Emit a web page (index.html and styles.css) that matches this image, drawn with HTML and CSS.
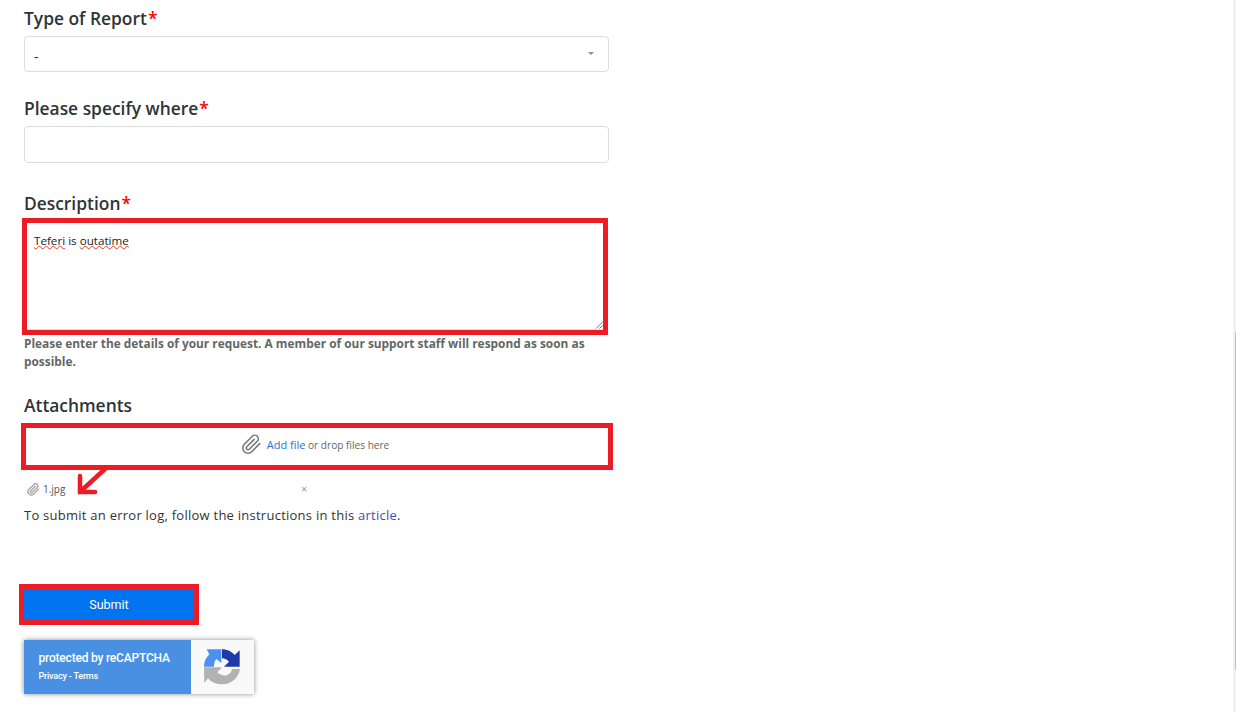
FILE: index.html
```html
<!DOCTYPE html>
<html lang="en">
<head>
<meta charset="utf-8">
<title>Submit a request</title>
<link rel="stylesheet" href="styles.css">
</head>
<body>
<form class="form">
  <div class="field field-type">
    <label class="label">Type of Report<span class="req">*</span></label>
    <div class="select"><span>-</span><span class="caret"></span></div>
  </div>
  <div class="field field-where">
    <label class="label">Please specify where<span class="req">*</span></label>
    <div class="input"></div>
  </div>
  <div class="field field-desc">
    <label class="label">Description<span class="req">*</span></label>
    <div class="textarea">
      <span class="typed"><span class="squiggle">Teferi</span> is <span class="squiggle">outatime</span></span>
      <svg class="grip" viewBox="0 0 8 8" width="8" height="8"><path d="M1 7.5 7.5 1M4.5 7.5 7.5 4.5" stroke="#777" stroke-width="1" fill="none"/></svg>
    </div>
    <p class="help">Please enter the details of your request. A member of our support staff will respond as soon as possible.</p>
  </div>
  <div class="field field-attach">
    <label class="label">Attachments</label>
    <div class="drop">
      <svg class="clip" viewBox="0 0 24 24" width="21" height="21"><path d="M21.44 11.05l-9.19 9.19a6 6 0 0 1-8.49-8.49l9.19-9.19a4 4 0 0 1 5.66 5.66l-9.2 9.19a2 2 0 0 1-2.83-2.83l8.49-8.48" fill="none" stroke="#777" stroke-width="1.8" stroke-linecap="round"/></svg>
      <span class="drop-text"><a class="add">Add file</a> or drop files here</span>
    </div>
    <div class="file">
      <svg class="clip-small" viewBox="0 0 24 24" width="13" height="13"><path d="M21.44 11.05l-9.19 9.19a6 6 0 0 1-8.49-8.49l9.19-9.19a4 4 0 0 1 5.66 5.66l-9.2 9.19a2 2 0 0 1-2.83-2.83l8.49-8.48" fill="none" stroke="#aaa" stroke-width="2.6" stroke-linecap="round"/></svg>
      <span class="file-name">1.jpg</span>
      <span class="file-x">×</span>
    </div>
    <p class="note">To submit an error log, follow the instructions in this <a class="article">article</a>.</p>
  </div>
  <div class="submit-box"><button type="button" class="submit">Submit</button></div>
  <div class="captcha">
    <div class="captcha-text">
      <div class="captcha-title">protected by reCAPTCHA</div>
      <div class="captcha-links">Privacy - Terms</div>
    </div>
    <div class="captcha-logo">
      <svg viewBox="0 0 120 120" width="40" height="40">
        <path fill="#4a90f5" d="M6 59C6 44 12 32 22 22L14 7H58V48L43 36C38 42 36 50 36 59Z"/>
        <path fill="#1c3aa9" d="M60 7C76 7 90 14 98 24L113 10V59H66L81 44C76 38 68 34 60 34Z"/>
        <path fill="#b2b2b2" d="M6 61H60L46 76C52 84 66 88 76 84C84 80 88 76 90 66H114C110 92 88 112 60 112C42 112 28 106 18 94L7 108Z"/>
      </svg>
    </div>
  </div>
</form>
<svg class="arrow" viewBox="0 0 40 30" width="40" height="30"><path d="M30 2 6 24M5 9V25H20" fill="none" stroke="#ed1c24" stroke-width="4.5" stroke-linecap="round"/></svg>
<div class="scrollbar"><div class="thumb"></div></div>
</body>
</html>
```
FILE: styles.css
```css
* { box-sizing: border-box; }
html, body { height: 100%; }
body {
  margin: 0;
  background: #fff;
  color: #2f3941;
  font-family: "Open Sans", "Noto Sans", sans-serif;
  overflow: hidden;
  position: relative;
}
.form {
  width: 640px;
  padding: 7px 0 0 24px;
  display: flex;
  flex-direction: column;
}
.field { display: flex; flex-direction: column; }
.field-where { margin-top: 25px; }
.field-desc { margin-top: 29px; }
.field-attach { margin-top: 24px; }
.label {
  display: block;
  height: 24px;
  line-height: 22px;
  font-size: 17.4px;
  font-weight: 600;
  color: #2f3436;
}
.req { color: #f00; margin-left: 1px; }
.select {
  margin-top: 5px;
  width: 585px;
  height: 36px;
  border: 1px solid #ddd;
  border-radius: 4px;
  display: flex;
  align-items: center;
  justify-content: space-between;
  padding: 5px 14px 0 9px;
  font-size: 14px;
  color: #333;
}
.caret {
  width: 0;
  height: 0;
  border-left: 3px solid transparent;
  border-right: 3px solid transparent;
  border-top: 3.5px solid #8f8f8f;
  margin-top: -7px;
}
.input {
  margin-top: 5px;
  width: 585px;
  height: 37px;
  border: 1px solid #ddd;
  border-radius: 4px;
}
.textarea {
  margin: 2px 0 0 -2px;
  width: 586px;
  height: 117px;
  border: 5px solid #ed1c24;
  position: relative;
  padding: 9px 7px;
  font-size: 11.65px;
  line-height: 18px;
  color: #222;
}
.textarea::after {
  content: "";
  position: absolute;
  left: 0;
  right: 0;
  bottom: 0;
  height: 1px;
  background: #ddd;
}
.squiggle {
  text-decoration: underline wavy #e33;
  text-decoration-thickness: 1px;
  text-decoration-skip-ink: none;
  text-underline-offset: 0;
}
.grip { position: absolute; right: 0; bottom: 1px; }
.help {
  margin: -1px 0 0;
  width: 585px;
  font-size: 11.88px;
  line-height: 18px;
  font-weight: 700;
  color: #666;
}
.drop {
  margin: 5px 0 0 -3px;
  width: 592px;
  height: 47px;
  border: 5px solid #ed1c24;
  display: flex;
  align-items: center;
  justify-content: center;
  gap: 5px;
  padding: 0 4px 5px 0;
  font-size: 10.1px;
  color: #666;
}
.add { color: #1f73d8; font-size: 11px; }
.file {
  position: relative;
  display: flex;
  align-items: center;
  width: 290px;
  height: 20px;
  margin-top: 9px;
  padding-left: 3px;
  gap: 3px;
  font-size: 10px;
  color: #555;
}
.file-x { position: absolute; left: 277px; top: 2px; font-size: 11px; color: #8a9bb0; }
.note {
  margin: 6px 0 0;
  font-size: 13px;
  line-height: 20px;
  letter-spacing: .25px;
  color: #333;
}
.article { color: #4a4ab0; }
.submit-box {
  margin: 59px 0 0 -5px;
  width: 180px;
  height: 41px;
  border: 5px solid #ed1c24;
}
.submit {
  display: block;
  width: 100%;
  height: 100%;
  border: 0;
  padding: 0;
  background: #0073f0;
  color: #fff;
  font: 400 12.5px Roboto, sans-serif;
}
.captcha {
  margin-top: 15px;
  width: 230px;
  height: 54px;
  display: flex;
  box-shadow: 0 0 5px rgba(0, 0, 0, .45);
  font-family: Roboto, sans-serif;
}
.captcha-text {
  width: 167px;
  background: #4a90e2;
  color: #fff;
  padding: 11px 0 0 14.5px;
}
.captcha-title { font-size: 12px; font-weight: 500; line-height: 14px; letter-spacing: -.2px; }
.captcha-links { font-size: 9px; font-weight: 500; line-height: 12px; margin-top: 5px; letter-spacing: -.2px; }
.captcha-logo {
  flex: 1;
  background: #f9f9f9;
  display: flex;
  align-items: center;
  justify-content: center;
  padding-right: 2px;
}
.arrow { position: absolute; left: 75px; top: 467px; }
.scrollbar {
  position: absolute;
  top: 0;
  right: 0;
  bottom: 0;
  width: 3px;
  background: #f1f1f1;
}
.thumb {
  position: absolute;
  top: 332px;
  right: 0;
  width: 1.5px;
  height: 338px;
  background: #c1c1c1;
}
```
